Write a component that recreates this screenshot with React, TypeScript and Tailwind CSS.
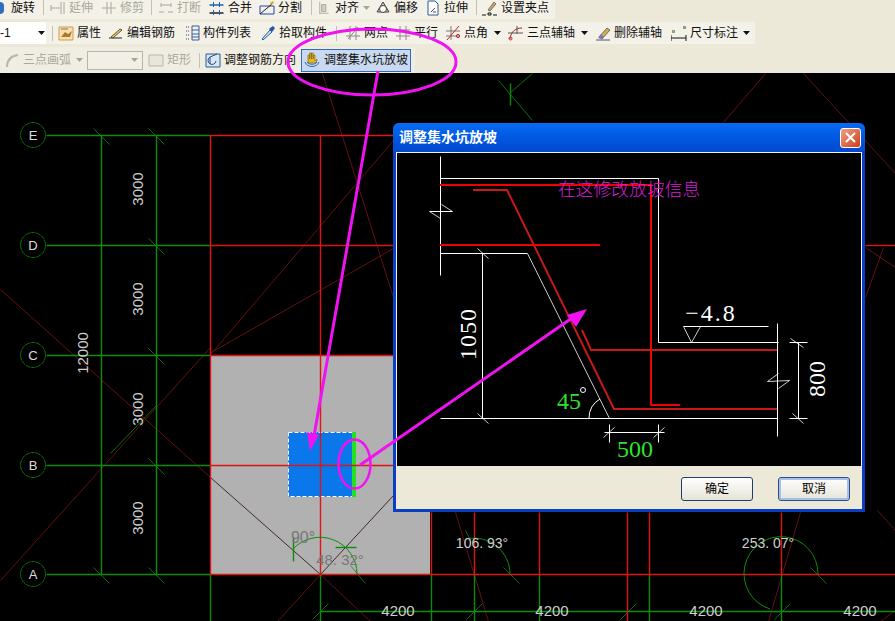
import type { ReactNode } from "react";

type Seg = [number, number, number, number];

const Dropdown = ({ grey }: { grey?: boolean }) => (
  <svg width="7" height="4" viewBox="0 0 7 4" className="shrink-0">
    <path d="M0 0h7L3.5 4z" fill={grey ? "#a8a598" : "#111"} />
  </svg>
);

const Sep = ({ ml, mr }: { ml: number; mr: number }) => (
  <div className="h-[15px] w-px shrink-0 bg-[#c5c2b4]" style={{ marginLeft: ml, marginRight: mr }} />
);

function Icon({ children, w = 16 }: { children: ReactNode; w?: number }) {
  return (
    <svg width={w} height="16" viewBox="0 0 16 16" fill="none" className="shrink-0">
      {children}
    </svg>
  );
}

const icons: Record<string, ReactNode> = {
  extend: (
    <Icon>
      <path d="M1 8h9M11 2v12M14 2v12M1 5v6" stroke="#a9a89c" />
    </Icon>
  ),
  trim: (
    <Icon>
      <path d="M1 8h14M6 2v12M10 2v12" stroke="#a9a89c" />
    </Icon>
  ),
  brk: (
    <Icon>
      <path d="M1 12h5M10 12h5M3 5h10M3 3v4M13 3v4" stroke="#a9a89c" />
    </Icon>
  ),
  merge: (
    <Icon w={17}>
      <path d="M1 13h14" stroke="#222" strokeWidth="1.5" />
      <path d="M1 5h14" stroke="#1d5fb8" strokeWidth="1.5" />
      <path d="M5 2v5M11 2v5M5 10v5M11 10v5" stroke="#1d5fb8" />
    </Icon>
  ),
  split: (
    <Icon>
      <path d="M1 6h14v8H1z" stroke="#2344b8" />
      <path d="M1 14 13 4" stroke="#222" />
      <path d="m11 3 3-2 1 2-3 2z" fill="#d9a520" />
    </Icon>
  ),
  align: (
    <Icon w={14}>
      <path d="M2 1v14M2 14h10" stroke="#a9a89c" />
      <path d="M4 4h5v8H4z" fill="#cfcdc0" stroke="#a9a89c" />
    </Icon>
  ),
  offset: (
    <Icon>
      <path d="M2 12 8 2l6 10z" fill="#f2b9a8" stroke="#444" />
      <circle cx="8" cy="9" r="3.5" fill="#fff" stroke="#444" />
    </Icon>
  ),
  stretch: (
    <Icon>
      <path d="M3 1h7l3 3v11H3z" fill="#fff" stroke="#2f5a90" />
      <path d="M6 12l4-4M8 12h3" stroke="#444" />
    </Icon>
  ),
  grip: (
    <Icon>
      <path d="m6 10 6-8 2 2-6 7z" fill="#c9a26a" stroke="#555" strokeWidth=".7" />
      <path d="M0 15h4M6 13h3v2H6zM11 15h4" stroke="#111" />
    </Icon>
  ),
  props: (
    <Icon>
      <path d="M1 2h14v13H1z" fill="#fbe0ac" stroke="#d39a52" />
      <path d="M3 12l4-5 3 2 4-3-2 6z" fill="#a77b33" />
      <path d="M3 4h7" stroke="#777" />
    </Icon>
  ),
  editBar: (
    <Icon>
      <path d="M1 13h13" stroke="#222" />
      <path d="m3 12 9-8 2 1-9 8z" fill="#e8c65c" stroke="#222" strokeWidth=".7" />
    </Icon>
  ),
  list: (
    <Icon>
      <path d="M2 2h3M2 6h3M2 10h3M2 14h3" stroke="#444" strokeDasharray="1 1" />
      <path d="M8 1h7v14H8zM8 5h7M8 9h7M8 12h7" stroke="#3a5d8f" fill="#eef3fa" />
    </Icon>
  ),
  pick: (
    <Icon>
      <path d="m2 14 8-9 2 2-9 8z" fill="#cde3f7" stroke="#2c5aa0" />
      <path d="m10 3 3-2 2 2-2 3-1 1-3-3z" fill="#2c5aa0" />
    </Icon>
  ),
  twoPt: (
    <Icon>
      <path d="M1 5h14M1 11h14M5 1v14M11 1v14" stroke="#8a8a8a" />
      <path d="m3 14 10-12" stroke="#8a8a8a" />
    </Icon>
  ),
  parallel: (
    <Icon>
      <path d="M1 5h14M1 11h14M5 1v14M11 1v14" stroke="#8a8a8a" />
    </Icon>
  ),
  angle: (
    <Icon>
      <path d="M1 6h14M1 11h14M6 1v14" stroke="#777" />
      <path d="M2 15 14 1" stroke="#c02020" />
      <circle cx="13" cy="11" r="1.6" stroke="#c02020" />
    </Icon>
  ),
  arc3: (
    <Icon>
      <path d="M2 14C3 6 8 3 14 3" stroke="#b02020" />
      <path d="M0 8h15M9 1v8" stroke="#555" />
      <circle cx="2.5" cy="13.5" r="1.5" stroke="#c02020" />
    </Icon>
  ),
  eraser: (
    <Icon>
      <path d="M1 15h14" stroke="#555" />
      <path d="m4 12 8-9 3 2-8 9z" fill="#c7b257" stroke="#444" strokeWidth=".7" />
      <path d="m3 13 3-4 3 3-2 2z" fill="#8a6cc0" />
    </Icon>
  ),
  dim: (
    <Icon>
      <path d="M0 13h15M0 10v6M15 10v6" stroke="#111" />
      <path d="M1 5h3v3H1z" fill="#86a878" />
      <path d="M12 1h3v3h-3z" fill="#86a878" />
    </Icon>
  ),
  arcGrey: (
    <Icon>
      <path d="M3 15C3 8 7 4 14 3" stroke="#b8b6a8" strokeWidth="2" />
    </Icon>
  ),
  rect: (
    <Icon>
      <path d="M1 3h14v11H1z" fill="#e8e6da" stroke="#b8b6a8" />
    </Icon>
  ),
  barDir: (
    <Icon>
      <path d="M1 2h14v13H1z" fill="#d8e6f5" stroke="#2f5a90" />
      <path d="M5 12V5l7-3M5 5a4 4 0 1 0 6 4" stroke="#244a78" />
    </Icon>
  ),
  slope: (
    <Icon>
      <path d="M4 10V3h1.6v4V1h1.8v6V1h1.8v6V3H11v6l2-2v2l-2 2H5z" fill="#e8b818" stroke="#7a5c10" strokeWidth=".6" />
      <path d="M1 10c2 6 12 6 14 0M3 10c2 3 8 3 10 0" stroke="#2f6ab0" />
    </Icon>
  ),
};

function Tool({ icon, label, off, w }: { icon: string; label: string; off?: boolean; w: number }) {
  return (
    <div className="flex shrink-0 items-center gap-[3px]" style={{ width: w }}>
      {icons[icon]}
      <span className={off ? "whitespace-nowrap text-[#a9a89c]" : "whitespace-nowrap text-[#111]"}>{label}</span>
    </div>
  );
}

const green: Seg[] = [
  [46, 135, 210, 135], [46, 245, 210, 245], [46, 355, 210, 355], [46, 465, 210, 465], [46, 574, 210, 574],
  [101, 135, 101, 574], [156, 135, 156, 574],
  [93, 128, 109, 144], [148, 128, 164, 144], [148, 238, 164, 254], [148, 348, 164, 364], [148, 458, 164, 474],
  [93, 567, 109, 583], [148, 567, 164, 583],
  [210, 574, 210, 621], [320, 574, 320, 621], [431, 574, 431, 621], [474, 574, 474, 621], [539, 574, 539, 621],
  [649, 574, 649, 621], [781, 574, 781, 621],
  [320, 611, 895, 611],
  [312, 619, 328, 603], [466, 619, 482, 603], [620, 619, 636, 603], [774, 619, 790, 603],
  [110, 453, 156, 405],
  [498, 80, 532, 120], [532, 73, 510, 92], [510, 83, 510, 105],
  [293, 537, 293, 561], [335, 547, 356, 547], [350, 565, 365, 583],
  [503, 567, 519, 583], [465, 530, 470, 540], [810, 567, 826, 583],
];

const red: Seg[] = [
  [210, 135, 393, 135], [210, 245, 393, 245], [210, 355, 393, 355], [210, 465, 393, 465], [210, 574, 895, 574],
  [865, 245, 895, 245],
  [210, 135, 210, 574], [320, 135, 320, 574],
  [431, 512, 431, 574], [474, 512, 474, 574], [539, 512, 539, 574], [627, 512, 627, 621], [649, 512, 649, 574], [781, 512, 781, 574],
];

const darkRed: Seg[] = [
  [0, 289, 210, 477], [320, 574, 370, 621], [0, 580, 210, 347], [211, 353, 393, 140], [209, 353, 393, 248],
  [322, 73, 393, 297], [320, 574, 277, 621], [765, 73, 723, 122], [803, 73, 895, 173], [865, 297, 883, 247],
  [865, 247, 895, 267], [455, 512, 488, 621], [800, 512, 768, 621], [877, 510, 895, 530], [880, 621, 895, 610],
];

const axes = [
  ["E", 135], ["D", 245], ["C", 355], ["B", 465], ["A", 574],
] as const;

// straight runs get a slightly soft width, slanted ticks stay thin
function Lines({ segs, color, width = 1.4 }: { segs: Seg[]; color: string; width?: number }) {
  return (
    <g stroke={color} transform="translate(.5 .5)">
      {segs.map((s, i) => (
        <line
          key={i}
          x1={s[0]}
          y1={s[1]}
          x2={s[2]}
          y2={s[3]}
          strokeWidth={s[0] === s[2] || s[1] === s[3] ? width : 0.8}
        />
      ))}
    </g>
  );
}

function Drawing() {
  return (
    <svg viewBox="0 73 895 548" className="block h-full w-full" fontFamily="'Liberation Sans', sans-serif">
      <rect x="210" y="355" width="220" height="219" fill="#b1b1b1" />
      <rect x="288" y="432" width="64" height="65" fill="#0a78ea" />
      <rect x="288.5" y="432.5" width="64" height="64" fill="none" stroke="#fff" strokeDasharray="4 2" />
      <rect x="352" y="432" width="4" height="65" fill="#22e022" />
      <Lines segs={darkRed} color="#7c1414" />
      <Lines segs={[[210, 477, 320, 574], [320, 574, 393, 495]]} color="#2a0808" />
      <Lines segs={green} color="#0c8c0c" />
      <Lines segs={red} color="#e01414" />
      <g fill="none" stroke="#0c8c0c">
        <path d="M293 549A37 37 0 0 1 357 574" />
        <path d="M466 539A36 36 0 0 1 510 574" />
        <path d="M818 574A37 37 0 1 0 770 609" />
      </g>
      {axes.map(([name, y]) => (
        <g key={name}>
          <circle cx="33" cy={y} r="12.5" fill="#000" stroke="#0a6e0a" strokeDasharray="5 0.6" />
          <text x="33" y={y + 5} textAnchor="middle" fontSize="13" fill="#ddd">
            {name}
          </text>
        </g>
      ))}
      <g fill="#cfcfcf" fontSize="15" textAnchor="middle">
        <text transform="translate(143 189) rotate(-90)">3000</text>
        <text transform="translate(143 299) rotate(-90)">3000</text>
        <text transform="translate(143 409) rotate(-90)">3000</text>
        <text transform="translate(143 518) rotate(-90)">3000</text>
        <text transform="translate(88 353) rotate(-90)">12000</text>
        <text x="552" y="616">4200</text>
        <text x="398" y="616">4200</text>
        <text x="706" y="616">4200</text>
        <text x="860" y="616">4200</text>
        <text x="482" y="548" fontSize="14">106. 93°</text>
        <text x="768" y="548" fontSize="14">253. 07°</text>
      </g>
      <g fill="#777" textAnchor="middle">
        <text x="303" y="543" fontSize="16">90°</text>
        <text x="340" y="565" fontSize="15">48. 32°</text>
      </g>
    </svg>
  );
}

function SlopeDetail() {
  const white: Seg[] = [
    [440, 156, 440, 275], [440, 178, 658, 178], [658, 178, 658, 342], [658, 342, 778, 342],
    [440, 253, 527, 253], [527, 253, 609, 418], [440, 418, 777, 418], [482, 253, 482, 418],
    [477, 248, 488, 258], [477, 413, 488, 423], [777, 323, 777, 436],
    [429, 211, 452, 211], [452, 211, 441, 204], [429, 211, 440, 218],
    [767, 381, 789, 380], [767, 381, 778, 373], [789, 380, 778, 388],
    [798, 342, 798, 418], [790, 338, 803, 347], [789, 342, 807, 342], [789, 418, 807, 418], [792, 413, 803, 423],
    [683, 326, 768, 326], [683, 326, 691, 342], [691, 342, 700, 326],
    [604, 432, 664, 432], [609, 424, 609, 442], [658, 424, 658, 442], [603, 437, 614, 427], [653, 437, 664, 427],
  ];
  return (
    <svg viewBox="397 153 465 313" className="block h-[313px] w-[465px]" fontFamily="'Liberation Serif', serif">
      <Lines segs={white} color="#fff" width={1} />
      <path d="M589 418A21 21 0 0 1 600 399" fill="none" stroke="#fff" />
      <circle cx="583" cy="390" r="2.5" fill="none" stroke="#fff" />
      <path d="M440 185H651V405H680M440 245H600" fill="none" stroke="#f00000" strokeWidth="2" />
      <path d="M473 190H507L614 409H777M582 330L591 350H777" fill="none" stroke="#c81818" strokeWidth="2" />
      <g fontSize="24">
        <text transform="translate(476 334) rotate(-90)" textAnchor="middle" fill="#fff" letterSpacing="1">1050</text>
        <text transform="translate(825 379) rotate(-90)" textAnchor="middle" fill="#fff">800</text>
        <text x="711" y="321" textAnchor="middle" fill="#fff" letterSpacing="2">−4.8</text>
        <text x="635" y="457" textAnchor="middle" fill="#30e030">500</text>
        <text x="569" y="409" textAnchor="middle" fill="#30e030">45</text>
      </g>
      <text x="558" y="196" fontSize="17.8" fill="#d61fd6" fontFamily="'Noto Sans CJK SC', sans-serif" fontWeight="300">
        在这修改放坡信息
      </text>
    </svg>
  );
}

function DialogButton({ label, focused }: { label: string; focused?: boolean }) {
  return (
    <button
      className={
        "flex h-[24px] w-[72px] items-center justify-center rounded-[3px] border bg-gradient-to-b from-white to-[#e6e3d6] text-[12px] text-black " +
        (focused ? "border-[#2a4f90] shadow-[inset_0_0_0_2px_#a8c0e8]" : "border-[#1d3f6e]")
      }
    >
      {label}
    </button>
  );
}

export default function App() {
  return (
    <div className="relative flex h-[621px] w-[895px] flex-col overflow-hidden bg-[#ece9d8] font-['Liberation_Sans','Noto_Sans_CJK_SC',sans-serif] text-[12px]">
      {/* toolbar rows */}
      <div className="flex h-[19px] w-[555px] items-center bg-[#f4f2e8] pb-1">
        <div className="h-3 w-[4px] shrink-0 rounded-r bg-[#2f6fc0]" />
        <span className="ml-[7px] text-[#111]">旋转</span>
        <Sep ml={8} mr={6} />
        <Tool icon="extend" label="延伸" off w={51} />
        <Tool icon="trim" label="修剪" off w={50} />
        <Sep ml={0} mr={6} />
        <Tool icon="brk" label="打断" off w={50} />
        <Tool icon="merge" label="合并" w={51} />
        <Tool icon="split" label="分割" w={52} />
        <Sep ml={0} mr={6} />
        <Tool icon="align" label="对齐" w={45} />
        <div className="mr-[5px]"><Dropdown grey /></div>
        <Tool icon="offset" label="偏移" w={50} />
        <Tool icon="stretch" label="拉伸" w={51} />
        <Sep ml={0} mr={5} />
        <Tool icon="grip" label="设置夹点" w={68} />
      </div>
      <div className="mt-[3px] flex h-[22px] w-[755px] items-center bg-[#f4f2e8]">
        <div className="flex h-full w-[46px] shrink-0 items-center justify-between bg-white pr-[1px]">
          <span className="text-[#111]">-1</span>
          <Dropdown />
        </div>
        <Sep ml={6} mr={5} />
        <Tool icon="props" label="属性" w={50} />
        <Tool icon="editBar" label="编辑钢筋" w={76} />
        <Tool icon="list" label="构件列表" w={76} />
        <Tool icon="pick" label="拾取构件" w={76} />
        <Sep ml={0} mr={8} />
        <Tool icon="twoPt" label="两点" w={50} />
        <Tool icon="parallel" label="平行" w={50} />
        <Tool icon="angle" label="点角" w={49} />
        <div className="mr-[7px]"><Dropdown /></div>
        <Tool icon="arc3" label="三点辅轴" w={73} />
        <div className="mr-[7px]"><Dropdown /></div>
        <Tool icon="eraser" label="删除辅轴" w={76} />
        <Tool icon="dim" label="尺寸标注" w={72} />
        <Dropdown />
      </div>
      <div className="mt-[3px] flex h-[26px] w-[415px] items-center bg-[#f0eee2] pl-[4px]">
        <Tool icon="arcGrey" label="三点画弧" off w={72} />
        <Dropdown grey />
        <div className="ml-[4px] flex h-[19px] w-[56px] items-center justify-end border border-[#b8b6a8] bg-[#f2f0e6] pr-1">
          <Dropdown grey />
        </div>
        <div className="ml-[5px]"><Tool icon="rect" label="矩形" off w={51} /></div>
        <Sep ml={0} mr={5} />
        <Tool icon="barDir" label="调整钢筋方向" w={96} />
        <div className="flex h-[23px] w-[110px] items-center gap-[4px] border border-[#316ac5] bg-[#c9d9f0] pl-[2px] text-[#111]">
          {icons.slope}
          <span className="whitespace-nowrap">调整集水坑放坡</span>
        </div>
      </div>

      {/* drawing area */}
      <div className="relative min-h-0 flex-1 bg-black">
        <Drawing />
        <div className="absolute left-[393px] top-[50px] flex h-[389px] w-[472px] flex-col overflow-hidden rounded-t-[6px] bg-[#0a3fc4]">
          <div className="flex h-[29px] shrink-0 items-center justify-between bg-gradient-to-b from-[#0a6cf2] via-[#0058e2] to-[#0248cc] pl-[6px] pr-[4px]">
            <span className="text-[14px] font-bold text-white">调整集水坑放坡</span>
            <div className="flex h-[20px] w-[21px] items-center justify-center rounded-[3px] border border-white bg-gradient-to-br from-[#f0a080] to-[#c83818]">
              <svg width="11" height="11" viewBox="0 0 11 11">
                <path d="M1 1l9 9M10 1l-9 9" stroke="#fff" strokeWidth="2" />
              </svg>
            </div>
          </div>
          <div className="mx-[3px] mb-[3px] flex min-h-0 flex-1 flex-col bg-[#ece9d8]">
            <div className="border border-b-0 border-[#f0f4fa] bg-black">
              <SlopeDetail />
            </div>
            <div className="flex flex-1 items-start justify-end gap-[25px] pr-[12px] pt-[11px]">
              <DialogButton label="确定" />
              <DialogButton label="取消" focused />
            </div>
          </div>
        </div>
      </div>

      {/* hand drawn callouts */}
      <svg viewBox="0 0 895 621" className="pointer-events-none absolute inset-0 h-full w-full">
        <g fill="none" stroke="#f012f0">
          <ellipse cx="372" cy="62" rx="84" ry="33" strokeWidth="3" />
          <ellipse cx="354.5" cy="464" rx="16" ry="24.5" strokeWidth="2.5" />
          <line x1="378" y1="71" x2="314" y2="436" strokeWidth="3" />
          <line x1="360" y1="465" x2="572" y2="318" strokeWidth="3" />
        </g>
        <path d="M310 451l-3-19 12 3z" fill="#f012f0" />
        <path d="M587 309l-20 6 9 12z" fill="#f012f0" />
      </svg>
    </div>
  );
}
